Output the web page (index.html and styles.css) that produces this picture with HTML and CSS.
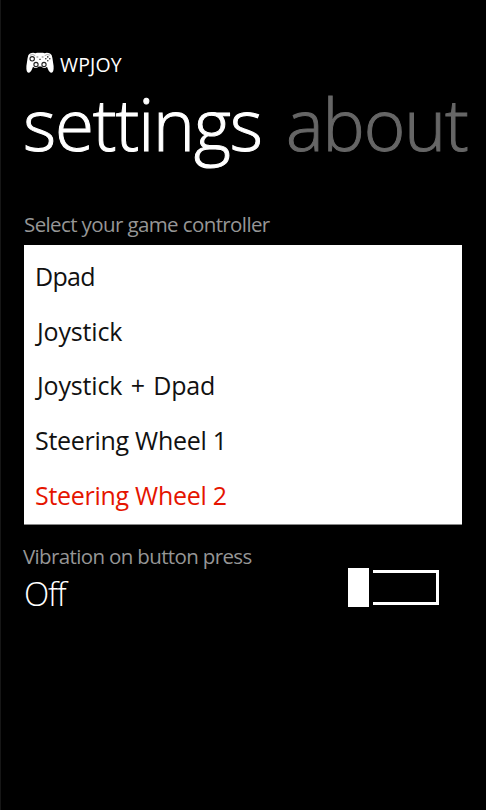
FILE: index.html
```html
<!DOCTYPE html>
<html lang="en">
<head>
<meta charset="utf-8">
<title>WPJOY</title>
<link rel="stylesheet" href="styles.css">
</head>
<body>
<main class="phone">
  <header class="brand">
    <svg class="brand-icon" viewBox="0 0 28 22" aria-hidden="true">
      <path fill="#fff" d="M4 1.5Q7 .3 9.5 1.3L11 .8H17L18.5 1.3Q21 .3 24 1.5Q26 2.4 26.4 6L27.6 14Q28 20.6 25.4 20.8Q23.7 21 21.9 17L21 14.8Q18 17.5 15.5 14.4H12.5Q10 17.5 7 14.8L6.1 17Q4.3 21 2.6 20.8Q0 20.6.4 14L1.6 6Q2 2.4 4 1.5Z"/>
      <g fill="none" stroke="#222" stroke-width="1.1">
        <circle cx="6.2" cy="6.8" r="2.2"/>
        <circle cx="10" cy="12.5" r="2.1"/>
        <circle cx="18" cy="12.5" r="2.1"/>
        <path d="M4 3.2Q7 1.6 9.3 3.7M18.7 3.7Q21 1.6 24 3.2" stroke="#999" stroke-width=".8"/>
        <path d="M10.5 5H12.3M15.7 5H17.5M13 7.4H15" stroke="#777"/>
      </g>
      <g fill="#222"><circle cx="21.8" cy="4.9" r=".8"/><circle cx="21.8" cy="8.8" r=".8"/><circle cx="19.8" cy="6.8" r=".8"/><circle cx="23.8" cy="6.8" r=".8"/></g>
    </svg>
    <span class="brand-name">WPJOY</span>
  </header>
  <nav class="pivot">
    <span class="pivot-item active">settings</span>
    <span class="pivot-item about">about</span>
  </nav>
  <div class="label controller-label">Select your game controller</div>
  <ul class="picker">
    <li class="dpad">Dpad</li>
    <li class="joystick">Joystick</li>
    <li class="joystick">Joystick + Dpad</li>
    <li class="wheel">Steering Wheel 1</li>
    <li class="wheel selected">Steering Wheel 2</li>
  </ul>
  <section class="vibration">
    <div>
      <div class="label vibration-label">Vibration on button press</div>
      <div class="state">Off</div>
    </div>
    <div class="toggle"><span class="thumb"></span><span class="track"></span></div>
  </section>
</main>
</body>
</html>
```
FILE: styles.css
```css
* { box-sizing: border-box; }
body {
  margin: 0;
  background: #000;
  color: #fff;
  font-family: "Open Sans", "Noto Sans", sans-serif;
}
.phone {
  width: 486px;
  height: 810px;
  overflow: hidden;
  padding: 50px 0 0 23px;
  border-left: 1px solid #161616;
  white-space: nowrap;
}
.brand { display: flex; height: 30px; }
.brand-icon { width: 28px; height: 22px; margin: 2px 0 0 2px; }
.brand-name { margin-left: 6px; font-size: 19.5px; line-height: 29px; letter-spacing: 0.15px; }
.pivot {
  display: flex;
  height: 90px;
  font-size: 71px;
  font-weight: 300;
  line-height: 88px;
}
.pivot-item { width: 264px; margin-left: -1px; letter-spacing: -1.1px; -webkit-text-stroke: 1px currentColor; }
.about { width: auto; color: #666; }
.label { font-size: 20.5px; line-height: 30px; color: #969696; letter-spacing: -0.61px; }
.controller-label { margin-top: 39px; }
.vibration-label { letter-spacing: -0.64px; margin-left: -1px; }
.picker {
  width: 438px;
  height: 280px;
  margin: 6px 0 0;
  padding: 4px 0 0 11px;
  border-bottom: 1px solid #888;
  list-style: none;
  background: #fff;
  color: #111;
  font-size: 25px;
  line-height: 54.7px;
}
.dpad { letter-spacing: -0.7px; }
.joystick { padding-left: 2px; letter-spacing: -0.15px; word-spacing: 2px; }
.wheel { letter-spacing: -0.28px; }
.selected { color: #e51400; }
.vibration { display: flex; justify-content: space-between; width: 415px; margin-top: 16px; }
.state { font-size: 33px; font-weight: 300; line-height: 46px; letter-spacing: -1.2px; }
.toggle { display: flex; align-items: center; gap: 4px; height: 39px; margin-top: 27px; }
.thumb { width: 21px; height: 39px; background: #fff; }
.track { width: 66px; height: 35px; border: 3px solid #fff; border-left: 0; }
```
